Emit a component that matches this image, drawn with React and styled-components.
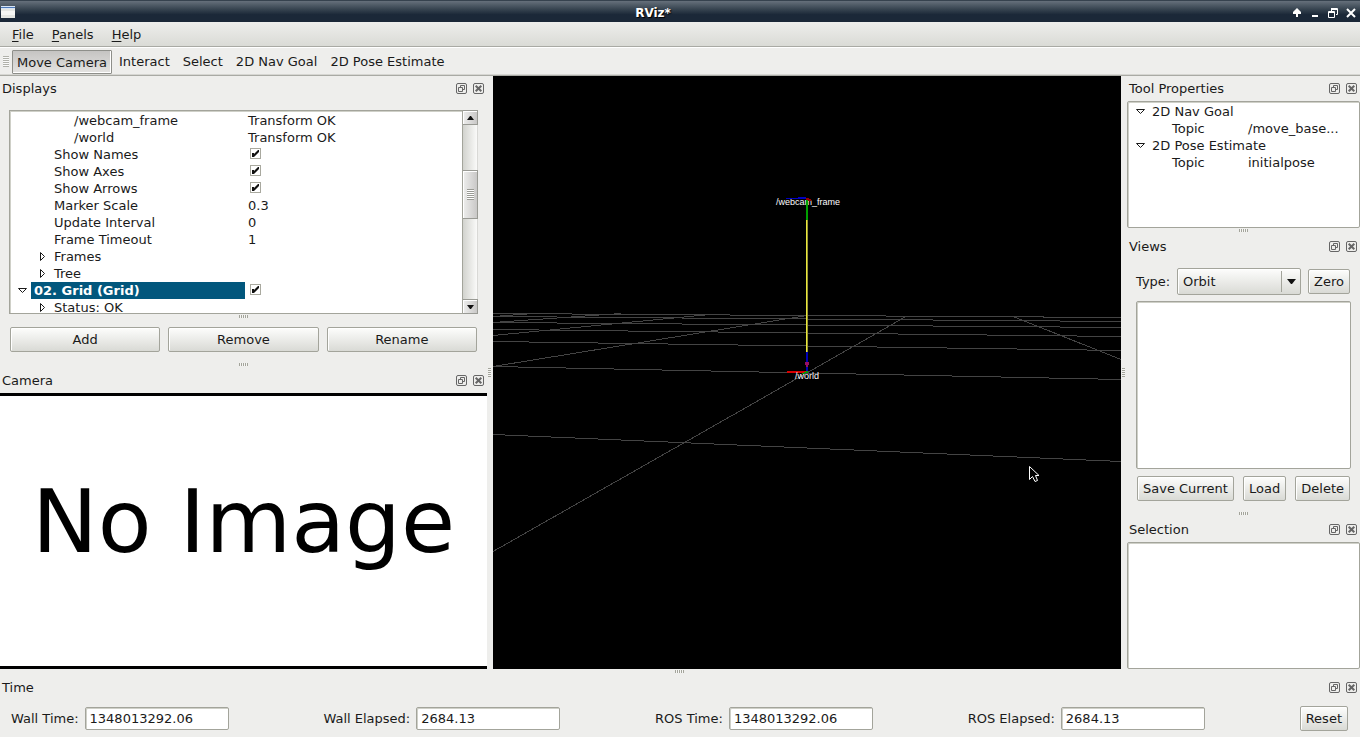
import { useState } from 'react'
import styled, { createGlobalStyle, css } from 'styled-components'

const GlobalStyle = createGlobalStyle`
  * {
    box-sizing: border-box;
  }

  body {
    margin: 0;
    background: #eeeeec;
    color: #1a1a1a;
    font: 13px/17px "DejaVu Sans", sans-serif;
  }

  button, input, select {
    margin: 0;
    color: inherit;
    font: inherit;
  }

  svg {
    display: block;
  }
`

const Window = styled.div`
  --border: #a3a49b;
  --face: linear-gradient(#fdfdfc, #d9dad5);

  display: flex;
  flex-direction: column;
  min-height: 100vh;
`

const TitleBar = styled.header`
  display: flex;
  align-items: center;
  height: 22px;
  padding: 2px 3px 0 1px;
  border-top: 1px solid #36424e;
  background: linear-gradient(#66707b, #36434f 40%, #1b2838 65%, #1b2838);
  color: #fff;
`

const Title = styled.h1`
  flex: 1;
  margin: 0;
  font-size: 12px;
  line-height: 18px;
  text-align: center;
  text-shadow: 1px 1px 1px #000;
`

const WindowButtons = styled.div`
  display: flex;
  gap: 6px;
`

const IconButton = styled.button`
  display: block;
  padding: 0;
  border: 0;
  background: none;
`

const MenuBar = styled.nav`
  display: flex;
  height: 26px;
  padding: 0 3px;
  border-bottom: 1px solid #fff;
  box-shadow: inset 0 -1px #a9aaa4;
  background: linear-gradient(#eeeeec, #d9dad5);
`

const MenuButton = styled.button`
  padding: 0 9px;
  border: 0;
  background: none;
  line-height: 24px;

  &::first-letter {
    text-decoration: underline;
    text-underline-offset: 2px;
  }
`

const ToolBar = styled.div`
  display: flex;
  align-items: center;
  gap: 1px;
  height: 28px;
  padding: 0 3px;
  border-bottom: 1px solid #a9aaa4;
  box-shadow: inset 0 -1px #d6d6d2;
`

const ToolButton = styled.button`
  height: 24px;
  padding: 0 5px;
  border: 1px solid transparent;
  background: none;

  ${({ $active }) => $active && css`
    padding: 1px 4px 0;
    border-color: #8e8f8a;
    border-radius: 1px;
    box-shadow: inset -1px -1px #fff;
    background: linear-gradient(#c5c4c2, #e4e3e1);
  `}
`

const Handle = styled.span`
  width: 6px;
  height: 11px;
  margin-right: 2px;
  background: repeating-linear-gradient(#b0b1aa 0 1px, #fafafa 1px 2px);
`

const Workspace = styled.main`
  display: flex;
  flex: 1;
`

const Column = styled.div`
  display: flex;
  flex: 0 0 ${({ $width }) => $width}px;
  flex-direction: column;
`

const SplitterBar = styled.div`
  display: flex;
  flex: 0 0 6px;
  align-items: center;
  justify-content: center;
  padding: 0 1px 1px 0;

  & > span {
    width: ${({ $vertical }) => $vertical ? 3 : 9}px;
    height: ${({ $vertical }) => $vertical ? 9 : 3}px;
    background: repeating-linear-gradient(
      ${({ $vertical }) => $vertical ? '180deg' : '90deg'},
      #a3a49b 0 1px,
      #f6f6f4 1px 2px
    );
  }
`

const Dock = styled.section`
  display: flex;
  flex-direction: column;
  flex: ${({ $grow }) => $grow ? 1 : 'none'};
`

const DockHeader = styled.div`
  display: flex;
  align-items: center;
  gap: 6px;
  height: 25px;
  padding: 0 3px 0 2px;
`

const DockTitle = styled.h2`
  flex: 1;
  margin: 0;
  font-size: 13px;
  font-weight: normal;
  line-height: 25px;
`

const Frame = styled.div`
  flex: ${({ $height }) => $height ? 'none' : 1};
  height: ${({ $height }) => $height ? `${$height}px` : 'auto'};
  border: 1px solid var(--border);
  border-radius: 2px;
  box-shadow: inset 1px 1px #cfd0c8;
  background: #fff;
  padding: 1px 0 0 1px;
  overflow: hidden;

  ${({ $scrolls }) => $scrolls && css`
    border-right: 0;
    border-radius: 0;
  `}
`

const DisplaysBody = styled.div`
  display: flex;
  flex-direction: column;
  padding: 9px 9px 10px;
`

const TreeArea = styled.div`
  display: flex;
  height: 204px;
`

const ScrollBar = styled.div`
  display: flex;
  flex-direction: column;
  width: 16px;
  border-right: 1px solid #d9d9d6;
  border-left: 1px solid var(--border);
  background: linear-gradient(90deg, #d2d3ce, #fafaf9);
`

const ScrollButton = styled.button`
  display: grid;
  place-items: center;
  width: 15px;
  height: 15px;
  padding: 0;
  border: 1px solid #999a94;
  border-left: 0;
  box-shadow: inset 1px 1px #fff;
  background: linear-gradient(90deg, #eeeeed, #c9c8c7);
`

const ScrollTrack = styled.div`
  flex: 1;
  padding-top: 45px;
`

const ScrollThumb = styled.div`
  display: grid;
  place-items: center;
  width: 15px;
  height: 49px;
  border: 1px solid #999a94;
  border-left: 0;
  box-shadow: inset 1px 1px #fff;
  background: linear-gradient(90deg, #eeeeed, #c9c8c7);

  & > span {
    width: 7px;
    height: 11px;
    background: repeating-linear-gradient(#999a94 0 1px, #fff 1px 2px);
  }
`

const TreeTable = styled.table`
  width: 100%;
  border-spacing: 0;
  table-layout: fixed;

  td {
    height: 17px;
    padding: 0;
    white-space: nowrap;
  }

  td:first-child {
    width: ${({ $nameWidth }) => $nameWidth}px;
  }

  td + td {
    padding-left: 3px;
  }
`

const NameCell = styled.div`
  display: flex;
  padding-left: ${({ $level }) => ($level - 1) * 20}px;
`

const ArrowSlot = styled.span`
  width: 20px;
  height: 17px;
`

const Name = styled.span`
  flex: 1;
  padding-left: 3px;

  ${({ $selected }) => $selected && css`
    background: #02577d;
    color: #fff;
    font-weight: bold;
  `}
`

const CheckLabel = styled.label`
  display: grid;
  width: 15px;
  height: 17px;
  padding: 2px 2px 4px;

  & > * {
    grid-area: 1 / 1;
    width: 11px;
    height: 11px;
  }

  & > input {
    appearance: none;
    border: 1px solid #a9a99f;
    background: #fff;
  }

  & > svg {
    pointer-events: none;
  }

  & > input:not(:checked) + svg {
    visibility: hidden;
  }
`

const PushButton = styled.button`
  flex: ${({ $grow }) => $grow ? '1 1 0' : 'none'};
  height: 25px;
  padding: 0 5px;
  border: 1px solid var(--border);
  border-radius: 2px;
  box-shadow: inset 1px 1px #fff;
  background: var(--face);
`

const ButtonRow = styled.div`
  display: flex;
  align-items: center;
  justify-content: space-between;
  gap: 8px;
  padding: ${({ $top }) => $top}px 1px 0;
`

const CameraView = styled.div`
  display: grid;
  flex: 1;
  place-items: center;
  padding-bottom: 18px;
  border: solid #000;
  border-width: 3px 0;
  background: #fff;
  color: #000;
  font-size: 88px;
  line-height: 88px;
  white-space: nowrap;
`

const Viewport = styled.div`
  flex: 1;
  min-width: 0;
  background: #000;

  & > svg {
    width: 100%;
    height: 100%;
  }

  text {
    fill: #fff;
    font: 9px "Liberation Sans", sans-serif;
  }
`

const ViewsBody = styled.div`
  display: flex;
  flex-direction: column;
  padding: 9px 9px 10px;
`

const TypeRow = styled.div`
  display: flex;
  align-items: center;
  gap: 7px;
  padding: 0 1px 6px 0;
`

const TypeLabel = styled.label`
  width: 34px;
  white-space: nowrap;
`

const SelectBox = styled.div`
  display: grid;
  flex: 1;
  align-items: center;

  & > * {
    grid-area: 1 / 1;
  }

  & > select {
    width: 100%;
    height: 27px;
    padding: 0 20px 0 5px;
    appearance: none;
    border: 1px solid var(--border);
    border-radius: 2px;
    box-shadow: inset 1px 1px #fff;
    background: var(--face);
  }

  & > span {
    display: grid;
    place-items: center;
    justify-self: end;
    width: 20px;
    height: 21px;
    border-left: 1px solid var(--border);
    pointer-events: none;
  }
`

const TimeRow = styled.div`
  display: flex;
  align-items: center;
  justify-content: space-between;
  padding: 6px 12px 6px 11px;
`

const TimeLabel = styled.label`
  display: flex;
  align-items: center;
  gap: 6px;
`

const TextField = styled.input`
  width: 144px;
  height: 23px;
  padding: 0 4px;
  border: 1px solid var(--border);
  border-radius: 2px;
  box-shadow: inset 1px 1px #cfd0c8;
  background: #fff;
`

const displayRows = [
  { name: '/webcam_frame', level: 3, value: 'Transform OK' },
  { name: '/world', level: 3, value: 'Transform OK' },
  { name: 'Show Names', level: 2, value: true },
  { name: 'Show Axes', level: 2, value: true },
  { name: 'Show Arrows', level: 2, value: true },
  { name: 'Marker Scale', level: 2, value: '0.3' },
  { name: 'Update Interval', level: 2, value: '0' },
  { name: 'Frame Timeout', level: 2, value: '1' },
  { name: 'Frames', level: 2, arrow: 'closed' },
  { name: 'Tree', level: 2, arrow: 'closed' },
  { name: '02. Grid (Grid)', level: 1, arrow: 'open', value: true, selected: true },
  { name: 'Status: OK', level: 2, arrow: 'closed' },
]

const toolRows = [
  { name: '2D Nav Goal', level: 1, arrow: 'open' },
  { name: 'Topic', level: 2, value: '/move_base...' },
  { name: '2D Pose Estimate', level: 1, arrow: 'open' },
  { name: 'Topic', level: 2, value: 'initialpose' },
]

const tools = ['Move Camera', 'Interact', 'Select', '2D Nav Goal', '2D Pose Estimate']

const times = [
  ['Wall Time:', '1348013292.06'],
  ['Wall Elapsed:', '2684.13'],
  ['ROS Time:', '1348013292.06'],
  ['ROS Elapsed:', '2684.13'],
]

// ground grid, [x1, y1, x2, y2]
const gridLines = [
  [0, 358, 628, 385],
  [0, 290, 628, 303],
  [0, 265, 628, 274],
  [0, 253, 628, 260],
  [0, 246, 628, 251],
  [0, 240, 628, 245],
  [0, 237, 628, 241],
  [0, 475, 413, 240],
  [0, 290, 314, 239],
  [0, 259, 217, 238],
  [0, 246, 128, 237],
  [0, 240, 41, 237],
  [520, 240, 628, 283],
]

function Splitter({ vertical }) {
  return <SplitterBar $vertical={vertical}><span /></SplitterBar>
}

function Arrow({ type }) {
  return (
    <svg width="20" height="17" fill="none" stroke="#1a1a1a" strokeWidth="1">
      {type === 'open'
        ? <path d="M7.500 6.500H15.500L11.500 10.500Z" />
        : <path d="M9.500 4.500V12.500L13.500 8.500Z" />}
    </svg>
  )
}

function Check({ label }) {
  const [checked, setChecked] = useState(true)

  return (
    <CheckLabel>
      <input
        type="checkbox"
        aria-label={label}
        checked={checked}
        onChange={e => setChecked(e.target.checked)}
      />
      <svg viewBox="0 0 11 11">
        <path d="M2 5H4V6L8 2H9V4L4 9H2Z" fill="#111" />
      </svg>
    </CheckLabel>
  )
}

function PropertyTree({ rows, nameWidth, label }) {
  return (
    <TreeTable $nameWidth={nameWidth} aria-label={label}>
      <tbody>
        {rows.map((row, i) => (
          <tr key={i}>
            <td>
              <NameCell $level={row.level}>
                <ArrowSlot>{row.arrow && <Arrow type={row.arrow} />}</ArrowSlot>
                <Name $selected={row.selected}>{row.name}</Name>
              </NameCell>
            </td>
            <td>{row.value === true ? <Check label={row.name} /> : row.value}</td>
          </tr>
        ))}
      </tbody>
    </TreeTable>
  )
}

function Header({ title }) {
  return (
    <DockHeader>
      <DockTitle>{title}</DockTitle>
      <IconButton type="button" aria-label={`Float ${title}`}>
        <svg width="11" height="11" fill="none" stroke="#666">
          <rect x=".5" y=".5" width="10" height="10" rx="1.5" />
          <path d="M4.500 4V2.500H8.500V6.500H7M2.500 4.500H6.500V8.500H2.500Z" />
        </svg>
      </IconButton>
      <IconButton type="button" aria-label={`Close ${title}`}>
        <svg width="11" height="11" fill="none" stroke="#666">
          <rect x=".5" y=".5" width="10" height="10" rx="1.500" />
          <path d="M2.700 2.700L8.300 8.300M8.300 2.700L2.700 8.300" strokeWidth="2" />
        </svg>
      </IconButton>
    </DockHeader>
  )
}

function Scene() {
  return (
    <Viewport>
      <svg viewBox="0 0 628 593" preserveAspectRatio="xMidYMid slice">
        <g stroke="#444" shapeRendering="crispEdges" transform="translate(0 .5)">
          {gridLines.map(([x1, y1, x2, y2], i) => (
            <line key={i} x1={x1} y1={y1} x2={x2} y2={y2} />
          ))}
        </g>
        <g shapeRendering="crispEdges">
          <path d="M313 144H315V276H313Z" fill="#e8e83c" />
          <path d="M314 144H315V276H314Z" fill="#9a9632" />
          <path d="M313 276H315V295H313Z" fill="#0000b4" />
          <path d="M312 286H316V289H315V291H313V289H312Z" fill="#960f64" />
          <path d="M294 295H313V297H294Z" fill="#d80000" />
          <path d="M313 295H315V297H312V298H309V297H311V296H313Z" fill="#00a000" />
        </g>
        <text x="283" y="129">/webcam_frame</text>
        <text x="302" y="303">/world</text>
        <g shapeRendering="crispEdges">
          <path d="M293 122H305V121H313V123H293Z" fill="#0000c0" />
          <path d="M313 124H315V144H313Z" fill="#00a000" />
          <path d="M313 122H316V123H318V125H315V124H313Z" fill="#900" />
        </g>
        <path
          d="M536.500 390.500V403.500L539.500 400.500L542 405.500L544.500 404.500L542.500 399.500H546Z"
          fill="#000"
          stroke="#fff"
        />
      </svg>
    </Viewport>
  )
}

export default function App() {
  const [tool, setTool] = useState('Move Camera')

  return (
    <Window>
      <GlobalStyle />
      <TitleBar>
        <svg width="14" height="13">
          <rect width="14" height="12" fill="#e4e5e1" />
          <rect width="14" height="3" fill="#d7e4f4" />
          <rect y="1" width="14" height="1" fill="#4b78b8" />
          <rect y="5" width="14" height="4" fill="#f5f5f3" />
        </svg>
        <Title>RViz*</Title>
        <WindowButtons>
          <IconButton type="button" aria-label="Shade">
            <svg width="12" height="12">
              <path d="M6 1L10 5V7H7V10H5V7H2V5Z" fill="#fff" />
            </svg>
          </IconButton>
          <IconButton type="button" aria-label="Minimize">
            <svg width="12" height="12">
              <path d="M3 8H9V10H3Z" fill="#fff" />
            </svg>
          </IconButton>
          <IconButton type="button" aria-label="Restore">
            <svg width="12" height="12" fill="none" stroke="#fff">
              <path d="M4 1.500H10.500V7.500H9M4.500 1V4M4 2.500H10" />
              <path d="M1.500 4.500H7.500V10.500H1.500ZM1 5.500H8" />
            </svg>
          </IconButton>
          <IconButton type="button" aria-label="Close">
            <svg width="12" height="12" fill="none" stroke="#fff" strokeWidth="2">
              <path d="M2 2L10 10M10 2L2 10" />
            </svg>
          </IconButton>
        </WindowButtons>
      </TitleBar>
      <MenuBar>
        <MenuButton type="button">File</MenuButton>
        <MenuButton type="button">Panels</MenuButton>
        <MenuButton type="button">Help</MenuButton>
      </MenuBar>
      <ToolBar>
        <Handle />
        {tools.map(name => (
          <ToolButton
            key={name}
            type="button"
            $active={name === tool}
            onClick={() => setTool(name)}
          >
            {name}
          </ToolButton>
        ))}
      </ToolBar>
      <Workspace>
        <Column $width={487}>
          <Dock>
            <Header title="Displays" />
            <DisplaysBody>
              <TreeArea>
                <Frame $scrolls>
                  <PropertyTree rows={displayRows} nameWidth={234} label="Displays" />
                </Frame>
                <ScrollBar>
                  <ScrollButton type="button" aria-label="Scroll up">
                    <svg width="7" height="4"><path d="M0 4L3 0H4L7 4Z" fill="#111" /></svg>
                  </ScrollButton>
                  <ScrollTrack>
                    <ScrollThumb><span /></ScrollThumb>
                  </ScrollTrack>
                  <ScrollButton type="button" aria-label="Scroll down">
                    <svg width="7" height="4"><path d="M0 0H7L4 4H3Z" fill="#111" /></svg>
                  </ScrollButton>
                </ScrollBar>
              </TreeArea>
              <Splitter />
              <ButtonRow $top={7}>
                <PushButton $grow type="button">Add</PushButton>
                <PushButton $grow type="button">Remove</PushButton>
                <PushButton $grow type="button">Rename</PushButton>
              </ButtonRow>
            </DisplaysBody>
          </Dock>
          <Splitter />
          <Dock $grow>
            <Header title="Camera" />
            <CameraView>No Image</CameraView>
          </Dock>
        </Column>
        <Splitter vertical />
        <Scene />
        <Splitter vertical />
        <Column $width={233}>
          <Dock>
            <Header title="Tool Properties" />
            <Frame $height={127}>
              <PropertyTree rows={toolRows} nameWidth={116} label="Tool Properties" />
            </Frame>
          </Dock>
          <Splitter />
          <Dock>
            <Header title="Views" />
            <ViewsBody>
              <TypeRow>
                <TypeLabel htmlFor="view-type">Type:</TypeLabel>
                <SelectBox>
                  <select id="view-type" defaultValue="Orbit">
                    <option>Orbit</option>
                  </select>
                  <span>
                    <svg width="9" height="5"><path d="M0 0H9L5 5H4Z" fill="#111" /></svg>
                  </span>
                </SelectBox>
                <PushButton type="button">Zero</PushButton>
              </TypeRow>
              <Frame $height={168} />
              <ButtonRow $top={7}>
                <PushButton type="button">Save Current</PushButton>
                <PushButton type="button">Load</PushButton>
                <PushButton type="button">Delete</PushButton>
              </ButtonRow>
            </ViewsBody>
          </Dock>
          <Splitter />
          <Dock $grow>
            <Header title="Selection" />
            <Frame />
          </Dock>
        </Column>
      </Workspace>
      <Splitter />
      <Dock>
        <Header title="Time" />
        <TimeRow>
          {times.map(([label, value]) => (
            <TimeLabel key={label}>
              {label}
              <TextField type="text" readOnly value={value} />
            </TimeLabel>
          ))}
          <PushButton type="button">Reset</PushButton>
        </TimeRow>
      </Dock>
    </Window>
  )
}
